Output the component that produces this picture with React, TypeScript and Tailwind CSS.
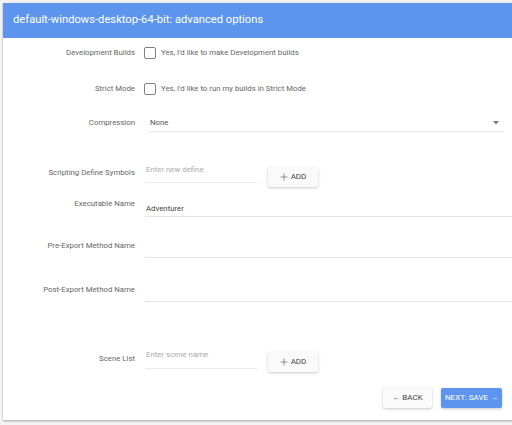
import React from "react";

const Label = ({ children, cls = "" }: { children: React.ReactNode; cls?: string }) => (
  <div className={"w-[132px] shrink-0 text-right text-[7.8px] leading-[10px] text-[#666] " + cls}>{children}</div>
);

const Checkbox = () => (
  <div className="w-[12px] h-[12px] rounded-[2px] border-[1.5px] border-[#808080] shrink-0" />
);

const AddButton = ({ cls = "" }: { cls?: string }) => (
  <div className={"w-[50px] h-[20px] ml-[11px] bg-[#fafafa] rounded-[2px] flex items-center justify-center gap-[3px] text-[8px] text-[#444] shadow-[0_1px_3px_rgba(0,0,0,0.22)] " + cls}>
    <svg width="8" height="8" viewBox="0 0 8 8"><path d="M4 0.5V7.5M0.5 4H7.5" stroke="#666" strokeWidth="0.7" /></svg>
    <span>ADD</span>
  </div>
);

export default function App() {
  return (
    <div className="h-[425px] w-[512px] overflow-hidden bg-[#f3f3f3] pt-[3px] pl-[3px]" style={{ fontFamily: "Roboto, 'Liberation Sans', sans-serif" }}>
      <div className="w-[520px] h-[417px] bg-white shadow-[0_1px_2px_rgba(0,0,0,0.35)] flex flex-col">
        <div className="h-[35px] bg-[#5d95ee] flex items-center pl-[10px] text-white text-[11.2px]">
          default-windows-desktop-64-bit: advanced options
        </div>
        {/* Development builds */}
        <div className="flex items-center h-[20px] mt-[5px]">
          <Label>Development Builds</Label>
          <div className="ml-[9px] flex items-center">
            <Checkbox />
            <span className="ml-[5px] text-[7.8px] text-[#666]">Yes, I'd like to make Development builds</span>
          </div>
        </div>
        {/* Strict mode */}
        <div className="flex items-center h-[20px] mt-[16px]">
          <Label>Strict Mode</Label>
          <div className="ml-[9px] flex items-center">
            <Checkbox />
            <span className="ml-[5px] text-[7.8px] text-[#666]">Yes, I'd like to run my builds in Strict Mode</span>
          </div>
        </div>
        {/* Compression */}
        <div className="flex items-center h-[18px] mt-[15px]">
          <Label>Compression</Label>
          <div className="ml-[14px] w-[355px] h-[18px] border-b border-[#e3e3e3] flex items-center justify-between pl-[1px] pr-[5px]">
            <span className="text-[7.8px] text-[#555]">None</span>
            <svg width="6" height="4" viewBox="0 0 6 4"><path d="M0 0H6L3 3.5Z" fill="#777" /></svg>
          </div>
        </div>
        {/* Scripting define symbols */}
        <div className="flex items-start h-[24px] mt-[31px]">
          <Label cls="mt-[5px]">Scripting Define Symbols</Label>
          <div className="ml-[10px] w-[112px] h-[20px] border-b border-[#ebebeb] pt-[2px] pl-[1px] text-[7.8px] leading-[10px] text-[#aaa]">Enter new define</div>
          <AddButton cls="mt-[4px]" />
        </div>
        {/* Executable name */}
        <div className="flex items-start h-[18px] mt-[12px]">
          <Label>Executable Name</Label>
          <div className="ml-[10px] flex-1 h-[18px] border-b border-[#e3e3e3] pt-[5px] pl-[1px] text-[7.8px] leading-[10px] text-[#444]">Adventurer</div>
        </div>
        {/* Pre-export */}
        <div className="flex items-start h-[17px] mt-[24px]">
          <Label>Pre-Export Method Name</Label>
          <div className="ml-[10px] flex-1 h-[17px] border-b border-[#e3e3e3]" />
        </div>
        {/* Post-export */}
        <div className="flex items-start h-[17px] mt-[27px]">
          <Label>Post-Export Method Name</Label>
          <div className="ml-[10px] flex-1 h-[17px] border-b border-[#e3e3e3]" />
        </div>
        {/* Scene list */}
        <div className="flex items-start h-[22px] mt-[48px]">
          <Label cls="mt-[4px]">Scene List</Label>
          <div className="ml-[10px] w-[112px] h-[19px] border-b border-[#ebebeb] pl-[1px] text-[7.8px] leading-[10px] text-[#aaa]">Enter scene name</div>
          <AddButton cls="mt-[2px]" />
        </div>
        {/* Footer */}
        <div className="flex justify-end items-center gap-[9px] pr-[21px] mt-[15px]">
          <div className="w-[49px] h-[21px] bg-[#fafafa] rounded-[2px] flex items-center justify-center gap-[2px] text-[8px] text-[#444] shadow-[0_1px_3px_rgba(0,0,0,0.22)]">
            <span>←</span><span>BACK</span>
          </div>
          <div className="w-[61px] h-[20px] bg-[#5d95ee] rounded-[2px] flex items-center justify-center gap-[2px] text-[8px] text-white shadow-[0_1px_3px_rgba(0,0,0,0.22)]">
            <span>NEXT: SAVE</span><span>→</span>
          </div>
        </div>
      </div>
    </div>
  );
}
